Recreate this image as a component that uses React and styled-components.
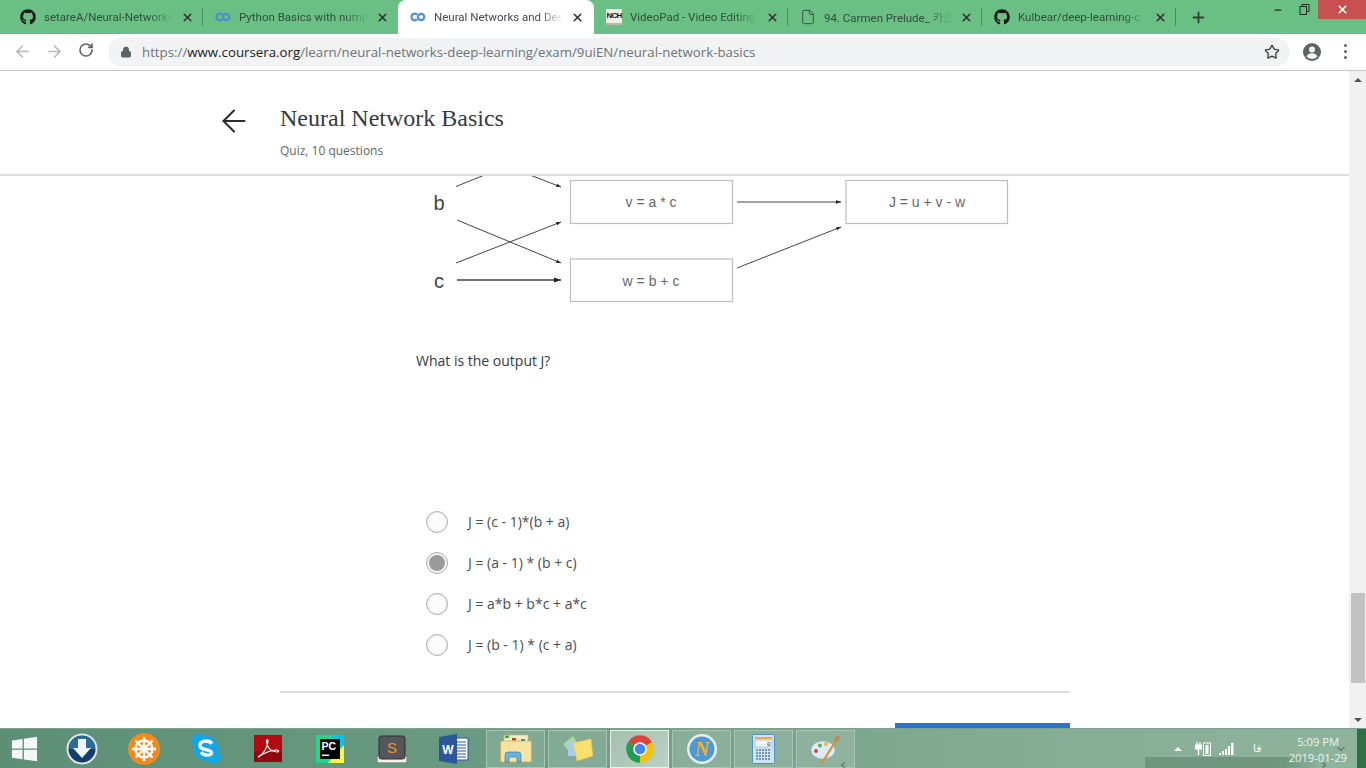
import styled, { createGlobalStyle } from 'styled-components';
import { FaGithub } from 'react-icons/fa';
import { ArrowLeft, ArrowRight, RotateCw, Lock, Star, X, Plus, File, Minus } from 'lucide-react';

const GlobalStyle = createGlobalStyle`
  html, body { margin: 0; padding: 0; height: 100%; overflow: hidden; background: #fff; }
  #root { height: 100%; }
  * { box-sizing: border-box; }
`;

const tabs = [
  { title: 'setareA/Neural-Networks', icon: 'github', width: 195 },
  { title: 'Python Basics with numpy', icon: 'coursera', width: 195 },
  { title: 'Neural Networks and Deep', icon: 'coursera', width: 196, active: true },
  { title: 'VideoPad - Video Editing', icon: 'nch', width: 194 },
  { title: '94. Carmen Prelude_ 카르멘', icon: 'doc', width: 194 },
  { title: 'Kulbear/deep-learning-c', icon: 'github', width: 194 },
];

const answers = [
  { text: 'J = (c - 1)*(b + a)' },
  { text: 'J = (a - 1) * (b + c)', checked: true },
  { text: 'J = a*b + b*c + a*c' },
  { text: 'J = (b - 1) * (c + a)' },
];

const Screen = styled.div`
  display: flex;
  flex-direction: column;
  height: 768px;
  width: 1366px;
  overflow: hidden;
  font-family: "Open Sans", "Liberation Sans", sans-serif;
`;

const TabStrip = styled.div`
  display: flex;
  align-items: stretch;
  height: 34px;
  padding-left: 8px;
  background: #6abf84;
  position: relative;
`;

const Tab = styled.div`
  position: relative;
  flex: none;
  width: ${p => p.$width}px;
  display: flex;
  align-items: center;
  padding: 0 ${p => (p.$active ? '10px' : '9px')} 0 12px;
  gap: 8px;
  background: ${p => (p.$active ? '#fff' : 'transparent')};
  border-radius: ${p => (p.$active ? '8px 8px 0 0' : '0')};
  &::after {
    content: ${p => (p.$divider ? '""' : 'none')};
    position: absolute;
    right: 0;
    top: 8px;
    bottom: 8px;
    width: 1px;
    background: #4a8a60;
  }
`;

const TabIconBox = styled.span`
  flex: none;
  width: 16px;
  height: 16px;
  display: flex;
  align-items: center;
  justify-content: center;
`;

const TabTitle = styled.span`
  flex: 1;
  min-width: 0;
  white-space: nowrap;
  overflow: hidden;
  font-size: 11.5px;
  font-family: Roboto, "Noto Sans CJK KR", sans-serif;
  color: ${p => (p.$active ? '#45484c' : '#2f4f3b')};
  mask-image: linear-gradient(90deg, #000 82%, transparent 100%);
`;

const TabClose = styled(X)`
  flex: none;
  width: 13px;
  height: 13px;
  color: #333;
  stroke-width: 3;
`;

const NchBadge = styled.span`
  width: 16px;
  height: 16px;
  background: #efefe8;
  color: #111;
  border-bottom: 2px solid #b9b9a8;
  font: bold 8px/13px "Liberation Sans", sans-serif;
  text-align: center;
  letter-spacing: -0.7px;
  white-space: nowrap;
`;

const NewTab = styled(Plus)`
  align-self: center;
  margin-left: 14px;
  width: 17px;
  height: 17px;
  color: #2f4437;
  stroke-width: 2.6;
`;

const WindowControls = styled.div`
  position: absolute;
  top: 0;
  right: 0;
  display: flex;
  align-items: flex-start;
  height: 19px;
`;

const WindowButton = styled.div`
  width: ${p => (p.$close ? '48px' : '26px')};
  height: 19px;
  margin-right: ${p => (p.$last ? '1px' : '0')};
  display: flex;
  align-items: center;
  justify-content: center;
  background: ${p => (p.$close ? '#c75050' : 'transparent')};
  color: ${p => (p.$close ? '#fff' : '#1f2f26')};
`;

const Toolbar = styled.div`
  display: flex;
  align-items: center;
  height: 37px;
  padding-bottom: 1px;
  background: #fff;
  border-bottom: 1px solid #c8c8c8;
`;

const NavButton = styled.div`
  width: 32px;
  display: flex;
  justify-content: center;
  color: ${p => (p.$disabled ? '#b4b6b8' : '#5f6368')};
`;

const NavGroup = styled.div`
  display: flex;
  padding-left: 6px;
  margin-right: 6px;
`;

const Omnibox = styled.div`
  width: 1182px;
  height: 28px;
  border-radius: 14px;
  background: #f1f3f4;
  display: flex;
  align-items: center;
  padding: 0 10px 0 12px;
  gap: 10px;
`;

const Url = styled.div`
  flex: 1;
  font-size: 13.27px;
  font-family: "Open Sans", sans-serif;
  color: #6f7275;
  white-space: nowrap;
  b { font-weight: 400; color: #202124; }
`;

const ToolbarEnd = styled.div`
  display: flex;
  align-items: center;
  padding-left: 13px;
  gap: 23px;
  color: #5f6368;
`;

const Dots = styled.div`
  display: flex;
  flex-direction: column;
  gap: 3px;
  i {
    display: block;
    width: 3px;
    height: 3px;
    border-radius: 50%;
    background: #5f6368;
  }
`;

const Viewport = styled.div`
  flex: 1;
  min-height: 0;
  display: flex;
`;

const Page = styled.div`
  flex: 1;
  min-width: 0;
  display: flex;
  flex-direction: column;
  background: #fff;
`;

const QuizHeader = styled.header`
  flex: none;
  height: 105px;
  display: flex;
  align-items: flex-start;
  padding-left: 216px;
  border-bottom: 2px solid #dedede;
`;

const BackArrow = styled(ArrowLeft)`
  width: 36px;
  height: 36px;
  margin-top: 32px;
  margin-right: 28px;
  color: #2b2b2b;
  stroke-width: 1.4;
`;

const QuizTitle = styled.h1`
  margin: 31px 0 0;
  font: 400 24px/32px "Liberation Serif", serif;
  color: #373a3c;
`;

const QuizSub = styled.div`
  margin-top: 9px;
  font-size: 12px;
  line-height: 16px;
  color: #636668;
`;

const Scroller = styled.div`
  flex: 1;
  min-height: 0;
  overflow: hidden;
  padding-left: 280px;
`;

const Column = styled.div`
  width: 790px;
`;

const Diagram = styled.svg`
  display: block;
  margin-left: 136px;
`;

const Question = styled.p`
  margin: 44px 0 0 136px;
  font-size: 14px;
  line-height: 22px;
  color: #373a3c;
`;

const Answers = styled.div`
  margin: 139px 0 0 146px;
  display: flex;
  flex-direction: column;
  gap: 19px;
`;

const Answer = styled.label`
  display: flex;
  align-items: center;
  gap: 20px;
  height: 22px;
  font-size: 14px;
  color: #4a4d4f;
`;

const AnswerText = styled.span`
  margin-bottom: 2px;
`;

const Radio = styled.span`
  flex: none;
  width: 22px;
  height: 22px;
  border-radius: 50%;
  border: 1px solid #aeaeae;
  background: #fcfcfc;
  box-shadow: inset 0 0 3px #ddd;
  display: flex;
  align-items: center;
  justify-content: center;
  &::before {
    content: ${p => (p.$checked ? '""' : 'none')};
    width: 16px;
    height: 16px;
    border-radius: 50%;
    background: #9b9b9b;
  }
`;

const Divider = styled.hr`
  margin: 35px 0 0;
  border: 0;
  border-top: 2px solid #dedede;
`;

const SubmitRow = styled.div`
  display: flex;
  justify-content: flex-end;
  margin-top: 30px;
`;

const SubmitButton = styled.div`
  width: 175px;
  height: 48px;
  background: #2a73cc;
`;

const Scrollbar = styled.div`
  flex: none;
  width: 17px;
  background: #f1f1f1;
  display: flex;
  flex-direction: column;
  align-items: center;
`;

const ScrollArrow = styled.div`
  flex: none;
  height: 17px;
  display: flex;
  align-items: center;
  justify-content: center;
  width: 100%;
  &::before {
    content: "";
    border-left: 4px solid transparent;
    border-right: 4px solid transparent;
    ${p => (p.$down ? 'border-top: 4px solid #505050;' : 'border-bottom: 4px solid #505050;')}
  }
`;

const ScrollTrack = styled.div`
  flex: 1;
  width: 100%;
  padding-top: 505px;
`;

const ScrollThumb = styled.div`
  height: 90px;
  background: #c1c1c1;
  margin: 0 1px 0 2px;
`;

const Taskbar = styled.div`
  flex: none;
  height: 40px;
  display: flex;
  align-items: center;
  gap: 3px;
  color: #fff;
  background: linear-gradient(90deg, #5d8f76 0%, #6a9a82 35%, #83aa93 70%, #8fb49d 100%);
  border-top: 1px solid #7aa38c;
  position: relative;
  &::after {
    content: "";
    position: absolute;
    left: 1145px;
    right: 46px;
    bottom: 0;
    height: 11px;
    background: linear-gradient(90deg, rgba(70, 110, 88, 0.4) 80%, rgba(70, 110, 88, 0));
  }
`;

const StartButton = styled.div`
  flex: none;
  width: 49px;
  height: 39px;
  display: flex;
  align-items: center;
  justify-content: center;
`;

const AppSlot = styled.div`
  flex: none;
  width: 59px;
  height: 38px;
  display: flex;
  align-items: center;
  justify-content: center;
  border: ${p => (p.$active ? '1px solid #e8f0ea' : p.$framed ? '1px solid #a9c4b3' : '1px solid transparent')};
  background: ${p => (p.$active ? 'linear-gradient(135deg,#a4c0af,#bcd2c4)' : p.$framed ? 'rgba(255,255,255,0.14)' : 'transparent')};
`;

const Tray = styled.div`
  margin-left: auto;
  display: flex;
  align-items: center;
  height: 100%;
  position: relative;
  z-index: 1;
`;

const TrayCaret = styled.span`
  width: 0;
  height: 0;
  margin-right: 13px;
  border-left: 4px solid transparent;
  border-right: 4px solid transparent;
  border-bottom: 4px solid #f4f7f5;
`;

const TrayIcon = styled.span`
  display: flex;
  margin-right: ${p => p.$gap}px;
`;

const TrayLang = styled.span`
  margin: 0 4px 0 18px;
  width: 16px;
  font-size: 11px;
  color: #f2f6f3;
  font-family: "DejaVu Sans", sans-serif;
`;

const Clock = styled.div`
  width: 74px;
  text-align: right;
  font-size: 11.2px;
  line-height: 16px;
  color: #eef4f0;
  padding-top: 3px;
`;

const ClockTime = styled.div`
  margin-right: 8px;
`;

const ShowDesktop = styled.div`
  width: 9px;
  height: 100%;
  margin-left: 10px;
  background: #2f7046;
`;

const Chevron = styled.svg`
  position: absolute;
  left: ${p => p.$x}px;
  top: ${p => p.$y}px;
  z-index: 2;
`;

const CourseraIcon = () => (
  <svg width="17" height="10" viewBox="0 0 17 10" fill="none" stroke="#4a8fd4" strokeWidth="2.3">
    <path d="M7.600 2.600a3.500 3.500 0 1 0 0 4.800" />
    <circle cx="11.800" cy="5" r="3.400" />
  </svg>
);

const TabIcon = ({ kind }) => {
  if (kind === 'github') return <TabIconBox><FaGithub size={16} color="#1a1a1a" /></TabIconBox>;
  if (kind === 'coursera') return <TabIconBox><CourseraIcon /></TabIconBox>;
  if (kind === 'nch') return <TabIconBox><NchBadge>NCH</NchBadge></TabIconBox>;
  return <TabIconBox><File size={16} color="#3c4a42" strokeWidth={1.4} /></TabIconBox>;
};

const DiagramSvg = () => (
  <Diagram width="600" height="130" viewBox="416 176 600 130">
    <defs>
      <marker id="tip" markerWidth="6" markerHeight="6" refX="5" refY="2.5" orient="auto">
        <path d="M0 0.8 L5 2.5 L0 4.2 Z" fill="#222" />
      </marker>
    </defs>
    <g fill="#fff" stroke="#bdbdbd" strokeWidth="1.2">
      <rect x="570.5" y="180.5" width="162" height="43" />
      <rect x="570.5" y="259" width="162" height="42.5" />
      <rect x="846" y="180.5" width="161.5" height="43" />
    </g>
    <g stroke="#444" strokeWidth="1" fill="none" markerEnd="url(#tip)">
      <path d="M456 186.500 L502 168" markerEnd="none" />
      <path d="M512 168 L561 187" />
      <path d="M457 220 L561 263" />
      <path d="M456 263 L561 222" />
      <path d="M457 280 L561 280" strokeWidth="1.4" />
      <path d="M737 202 L841 202" />
      <path d="M737 268 L841 227" />
    </g>
    <g fontFamily="'Liberation Sans', sans-serif" fill="#666" fontSize="14" textAnchor="middle">
      <text x="651" y="207">v = a * c</text>
      <text x="651" y="286">w = b + c</text>
      <text x="927" y="207">J = u + v - w</text>
    </g>
    <g fontFamily="'Liberation Sans', sans-serif" fill="#444" fontSize="20" textAnchor="middle">
      <text x="439" y="210">b</text>
      <text x="439" y="288">c</text>
    </g>
  </Diagram>
);

const WinLogo = () => (
  <svg width="27" height="26" viewBox="0 0 28 26" fill="#f4f7f5">
    <path d="M1 4.200 L12 2.600 V12.400 H1 Z M13.400 2.400 L27 0.400 V12.400 H13.400 Z M1 13.800 H12 V23.600 L1 22 Z M13.400 13.800 H27 V25.600 L13.400 23.800 Z" />
  </svg>
);

const Orbit = () => (
  <svg width="32" height="32" viewBox="0 0 32 32">
    <circle cx="16" cy="16" r="15.500" fill="#dfe6e8" />
    <circle cx="16" cy="16" r="13.500" fill="#123f6b" />
    <path d="M3 16a13 13 0 0 1 26 0Z" fill="#2c6c9c" />
    <path d="M12 6h8v9h5L16 25 7 15h5Z" fill="#f4f7f9" />
  </svg>
);

const Helm = () => (
  <svg width="32" height="32" viewBox="0 0 32 32">
    <circle cx="16" cy="16" r="16" fill="#f58a1c" />
    <g stroke="#fff" strokeWidth="2.400" fill="none">
      <circle cx="16" cy="16" r="8.500" />
      <path d="M16 4v24M4 16h24M7.500 7.500l17 17M24.500 7.500l-17 17" />
    </g>
    <circle cx="16" cy="16" r="3.400" fill="#fff" />
  </svg>
);

const Skype = () => (
  <svg width="30" height="31" viewBox="0 0 30 31">
    <circle cx="15" cy="15.500" r="12.500" fill="#12a5e8" />
    <circle cx="7.500" cy="7.500" r="7" fill="#12a5e8" />
    <circle cx="22.500" cy="23.500" r="7" fill="#12a5e8" />
    <path d="M21 10.600C19.600 8.800 17.400 8 15 8c-3.500 0-6 1.700-6 4.500 0 5.600 11.500 3.200 11.500 7 0 1.500-1.800 2.600-4.800 2.600-2.600 0-4.300-1-5.700-2.800" fill="none" stroke="#fff" strokeWidth="3.400" />
  </svg>
);

const AdobePdf = () => (
  <svg width="28" height="28" viewBox="0 0 28 28">
    <rect width="28" height="27" fill="#b30b0f" />
    <rect y="16" width="28" height="11" fill="#8e0a0c" />
    <path d="M4 22c5-2 9-9 10-15 .4-3-2-3-1.500 0 1 6 5 10 11 10 2 0 1-2-1-2-5 0-13 3-18 7Z" fill="none" stroke="#fff" strokeWidth="1.200" />
  </svg>
);

const PyCharm = () => (
  <svg width="28" height="28" viewBox="0 0 28 28">
    <path d="M0 0H28V28H0Z" fill="#21d789" />
    <path d="M14 0H28V14Z" fill="#07c3f2" />
    <path d="M28 10V28H12Z" fill="#fcf84a" />
    <rect x="4" y="4" width="20" height="20" fill="#000" />
    <text x="5.500" y="15" fontSize="10.500" fontWeight="700" fill="#fff" fontFamily="'Liberation Sans', sans-serif">PC</text>
    <rect x="6" y="19.500" width="7" height="1.500" fill="#fff" />
  </svg>
);

const Sublime = () => (
  <svg width="30" height="28" viewBox="0 0 30 28">
    <rect x="0.500" y="21" width="29" height="6.500" rx="1.500" fill="#f1f1ee" stroke="#8a8a86" strokeWidth="0.500" />
    <rect x="2" y="1" width="26" height="23" rx="2.500" fill="#55565a" stroke="#2e2e30" />
    <text x="15" y="18" textAnchor="middle" fontSize="15" fontWeight="400" fill="#f0952e" fontFamily="'Liberation Sans', sans-serif">S</text>
  </svg>
);

const Word = () => (
  <svg width="30" height="30" viewBox="0 0 30 30">
    <rect x="13" y="4" width="16" height="22" fill="#fff" stroke="#2b579a" />
    <path d="M16 8h11M16 11h11M16 14h11M16 17h11M16 20h11M16 23h11" stroke="#2b579a" />
    <path d="M0 3 L18 0 V30 L0 27 Z" fill="#2b579a" />
    <text x="9" y="20" textAnchor="middle" fontSize="12" fontWeight="700" fill="#fff" fontFamily="'Liberation Sans', sans-serif">W</text>
  </svg>
);

const Explorer = () => (
  <svg width="32" height="30" viewBox="0 0 32 30">
    <rect x="4" y="1" width="24" height="10" fill="#f7edc4" stroke="#c9b263" strokeWidth="0.600" />
    <rect x="5" y="1.500" width="4" height="2.500" fill="#2bb34a" />
    <rect x="12" y="4" width="4" height="2.500" fill="#c43d2c" />
    <rect x="21" y="5" width="4" height="2.500" fill="#2a86cf" />
    <rect x="0.500" y="7" width="31" height="21" rx="1.500" fill="#f6e3a2" stroke="#c9a84f" strokeWidth="0.700" />
    <path d="M5 28V21q0-3 3-3h10q3 0 3 3v7h-4v-5H9v5Z" fill="#6bb4de" stroke="#2f74a4" strokeWidth="0.600" />
  </svg>
);

const Sticky = () => (
  <svg width="32" height="26" viewBox="0 0 32 26">
    <path d="M1 8 L11 0 L17 9 L8 17 Z" fill="#a5dc94" />
    <rect x="6" y="6" width="14" height="14" fill="#a9cdee" />
    <path d="M11 7 L29 3 L31 20 L15 25 Z" fill="#fbe06e" stroke="#e2c24a" strokeWidth="0.500" />
  </svg>
);

const Chrome = () => (
  <svg width="30" height="30" viewBox="0 0 24 24">
    <path d="M12 12 L2.470 6.500 A11 11 0 0 1 21.530 6.500 Z" fill="#db4437" />
    <path d="M12 12 L21.530 6.500 A11 11 0 0 1 12 23 Z" fill="#f4c20d" />
    <path d="M12 12 L12 23 A11 11 0 0 1 2.470 6.500 Z" fill="#1f9d55" />
    <circle cx="12" cy="12" r="5.400" fill="#fff" />
    <circle cx="12" cy="12" r="4.200" fill="#4285f4" />
  </svg>
);

const Navigator = () => (
  <svg width="30" height="30" viewBox="0 0 30 30">
    <circle cx="15" cy="15" r="15" fill="#e8eef0" />
    <circle cx="15" cy="15" r="12.500" fill="#4f9ad6" />
    <text x="15" y="22" textAnchor="middle" fontSize="20" fontWeight="700" fontStyle="italic" fill="#f4b21c" fontFamily="'Liberation Serif', serif">N</text>
  </svg>
);

const Calculator = () => (
  <svg width="23" height="30" viewBox="0 0 23 30">
    <rect x="0.500" y="0.500" width="22" height="29" rx="1" fill="#cfe3f2" stroke="#4f93c4" />
    <rect x="3" y="3" width="17" height="2" fill="#f2a93b" />
    <rect x="3" y="6" width="17" height="7" fill="#eef4f8" stroke="#7fa6c2" strokeWidth="0.500" />
    <text x="18.500" y="12" textAnchor="end" fontSize="6" fill="#333" fontFamily="'Liberation Mono', monospace">0</text>
    <path d="M4 16h15M4 19h15M4 22h15M4 25h15" stroke="#4f7fa8" strokeWidth="1.600" strokeDasharray="2 1" />
  </svg>
);

const Paint = () => (
  <svg width="30" height="30" viewBox="0 0 30 30">
    <ellipse cx="12" cy="16" rx="12" ry="9" fill="#d9ecf8" stroke="#8cb6d4" strokeWidth="0.600" />
    <circle cx="5" cy="17" r="2" fill="#d0483c" />
    <circle cx="9" cy="11.500" r="2" fill="#5bb04a" />
    <circle cx="15" cy="10" r="2" fill="#e8b63a" />
    <path d="M11 29 L26 5" stroke="#e88a1e" strokeWidth="2" />
    <path d="M23 6 L25 1 L29 3 L27 8 Z" fill="#b98a5e" />
  </svg>
);

const PlainApps = [Orbit, Helm, Skype, AdobePdf, PyCharm, Sublime, Word];
const FramedApps = [Explorer, Sticky, Chrome, Navigator, Calculator, Paint];

const Power = () => (
  <svg width="16" height="15" viewBox="0 0 16 15" fill="none" stroke="#fff">
    <path d="M2 1v3M5 1v3" strokeWidth="1.200" />
    <rect x="0.500" y="4" width="6" height="4" fill="#fff" />
    <path d="M3.500 8v6" strokeWidth="1.400" />
    <rect x="8.500" y="2" width="7" height="12.500" />
    <rect x="10.500" y="4" width="3" height="9" fill="#fff" stroke="none" />
  </svg>
);

const Signal = () => (
  <svg width="16" height="13" viewBox="0 0 16 13" fill="#fff">
    <rect x="0" y="11" width="2" height="2" />
    <rect x="3" y="9" width="2" height="4" />
    <rect x="6" y="7" width="2" height="6" />
    <rect x="9" y="4" width="2" height="9" />
    <rect x="12" y="1" width="2.500" height="12" />
  </svg>
);

const App = () => (
  <Screen>
    <GlobalStyle />
    <TabStrip>
      {tabs.map((t, i) => (
        <Tab
          key={t.title}
          $width={t.width}
          $active={t.active}
          $divider={!t.active && i !== 1}
        >
          <TabIcon kind={t.icon} />
          <TabTitle $active={t.active}>{t.title}</TabTitle>
          <TabClose />
        </Tab>
      ))}
      <NewTab />
      <WindowControls>
        <WindowButton><Minus size={10} strokeWidth={3} /></WindowButton>
        <WindowButton $last>
          <svg width="11" height="11" viewBox="0 0 11 11" fill="none" stroke="currentColor">
            <path d="M3 2.500V.5h7v7H8" />
            <rect x="1" y="2.500" width="6.500" height="8" />
          </svg>
        </WindowButton>
        <WindowButton $close><X size={13} strokeWidth={3} /></WindowButton>
      </WindowControls>
    </TabStrip>
    <Toolbar>
      <NavGroup>
        <NavButton $disabled><ArrowLeft size={19} /></NavButton>
        <NavButton $disabled><ArrowRight size={19} /></NavButton>
        <NavButton><RotateCw size={16} strokeWidth={2.4} /></NavButton>
      </NavGroup>
      <Omnibox>
        <Lock size={12} fill="#5f6368" color="#5f6368" />
        <Url>https://<b>www.coursera.org</b>/learn/neural-networks-deep-learning/exam/9uiEN/neural-network-basics</Url>
        <Star size={16} color="#3c4043" />
      </Omnibox>
      <ToolbarEnd>
        <svg width="18" height="18" viewBox="0 0 18 18">
          <circle cx="9" cy="9" r="9" fill="#5f6368" />
          <circle cx="9" cy="6.500" r="3" fill="#fff" />
          <path d="M3.500 13.500c1-2.500 3.300-3.200 5.500-3.200s4.500.7 5.500 3.200a7.500 7.500 0 0 1-11 0Z" fill="#fff" />
        </svg>
        <Dots><i /><i /><i /></Dots>
      </ToolbarEnd>
    </Toolbar>
    <Viewport>
      <Page>
        <QuizHeader>
          <BackArrow />
          <div>
            <QuizTitle>Neural Network Basics</QuizTitle>
            <QuizSub>Quiz, 10 questions</QuizSub>
          </div>
        </QuizHeader>
        <Scroller>
          <Column>
            <DiagramSvg />
            <Question>What is the output J?</Question>
            <Answers>
              {answers.map(a => (
                <Answer key={a.text}>
                  <Radio $checked={a.checked} />
                  <AnswerText>{a.text}</AnswerText>
                </Answer>
              ))}
            </Answers>
            <Divider />
            <SubmitRow><SubmitButton /></SubmitRow>
          </Column>
        </Scroller>
      </Page>
      <Scrollbar>
        <ScrollArrow />
        <ScrollTrack><ScrollThumb /></ScrollTrack>
        <ScrollArrow $down />
      </Scrollbar>
    </Viewport>
    <Taskbar>
      <StartButton><WinLogo /></StartButton>
      {PlainApps.map((Icon, i) => (
        <AppSlot key={i}><Icon /></AppSlot>
      ))}
      {FramedApps.map((Icon, i) => (
        <AppSlot key={i} $framed $active={Icon === Chrome}><Icon /></AppSlot>
      ))}
      <Tray>
        <TrayCaret />
        <TrayIcon $gap={8}><Power /></TrayIcon>
        <TrayIcon $gap={0}><Signal /></TrayIcon>
        <TrayLang>فا</TrayLang>
        <Clock>
          <ClockTime>5:09 PM</ClockTime>
          <div>2019-01-29</div>
        </Clock>
        <ShowDesktop />
      </Tray>
      <Chevron $x={840} $y={33} width="7" height="6" viewBox="0 0 7 6" fill="none" stroke="#5f7f6d" strokeWidth="1.500">
        <path d="M5 0.500 L1.500 3 L5 5.500" />
      </Chevron>
      <Chevron $x={1337} $y={17} width="8" height="6" viewBox="0 0 8 6" fill="none" stroke="#5f7f6d" strokeWidth="1.500">
        <path d="M0.500 1 L4 4.500 L7.500 1" />
      </Chevron>
      <Chevron $x={1321} $y={33} width="6" height="6" viewBox="0 0 6 6" fill="none" stroke="#5f7f6d" strokeWidth="1.500">
        <path d="M1.500 0.500 L4.500 3 L1.500 5.500" />
      </Chevron>
    </Taskbar>
  </Screen>
);

export default App;
